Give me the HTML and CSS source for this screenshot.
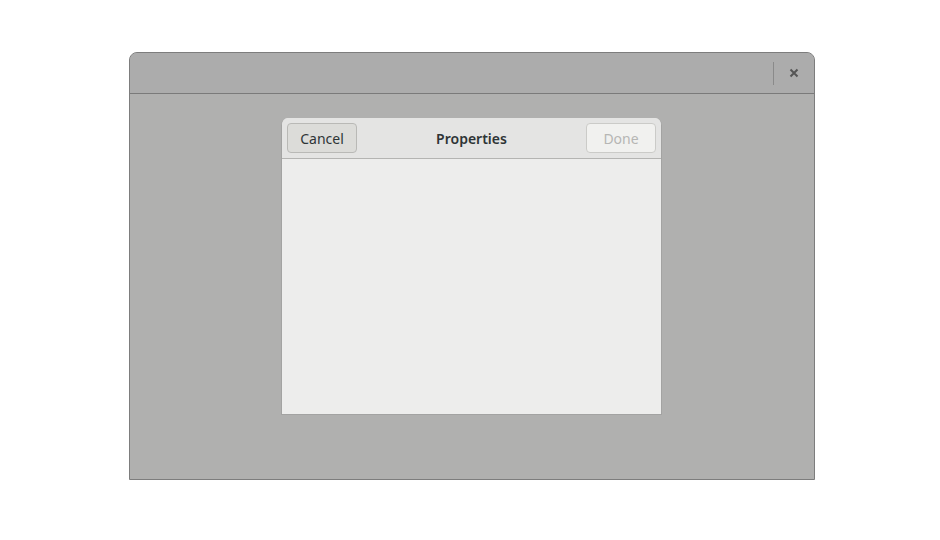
FILE: index.html
```html
<!DOCTYPE html>
<html>
<head>
<meta charset="utf-8">
<link rel="stylesheet" href="styles.css">
</head>
<body>
<div class="window">
  <div class="titlebar">
    <div class="sep"></div>
    <button class="close" aria-label="Close">
      <svg width="10" height="10" viewBox="0 0 10 10"><path d="M1.5 1.5 L8.5 8.5 M8.5 1.5 L1.5 8.5" stroke="#555" stroke-width="2" stroke-linecap="butt"/></svg>
    </button>
  </div>
  <div class="content">
    <div class="dialog">
      <div class="dheader">
        <button class="btn cancel">Cancel</button>
        <div class="dtitle">Properties</div>
        <button class="btn done">Done</button>
      </div>
      <div class="dbody"></div>
    </div>
  </div>
</div>
</body>
</html>
```
FILE: styles.css
```css
html, body { margin: 0; padding: 0; background: #ffffff; }
body { font-family: "Noto Sans", "DejaVu Sans", sans-serif; padding-top: 52px; padding-left: 129px; }
.window {
  width: 684px;
  height: 426px;
  border: 1px solid #7d7d7d;
  border-radius: 8px 8px 0 0;
  background: #b0b0af;
  display: flex;
  flex-direction: column;
  overflow: hidden;
}
.titlebar {
  height: 40px;
  background: #acacac;
  border-bottom: 1px solid #7a7a7a;
  display: flex;
  align-items: center;
  justify-content: flex-end;
  padding-right: 15px;
  flex: none;
}
.sep { width: 1px; height: 23px; background: #8a8a8a; margin-right: 15px; }
.close { border: 0; background: none; padding: 0; width: 10px; height: 10px; display: flex; }
.content { flex: 1; display: flex; justify-content: flex-start; padding-top: 24px; padding-left: 151px; }
.dialog {
  width: 379px;
  height: 296px;
  border: 1px solid #a3a3a2;
  border-top: 0;
  border-radius: 7px 7px 0 0;
  background: #ededec;
  display: flex;
  flex-direction: column;
  overflow: hidden;
}
.dheader {
  height: 40px;
  background: #e4e4e3;
  border-bottom: 1px solid #b4b4b2;
  display: flex;
  align-items: center;
  justify-content: space-between;
  padding: 0 5px 0 5px;
  flex: none;
}
.btn {
  width: 70px;
  height: 30px;
  border-radius: 4px;
  font-family: "Noto Sans", "DejaVu Sans", sans-serif;
  font-size: 14px;
  padding: 0;
  margin-top: 0;
}
.cancel { background: #dcdcd9; border: 1px solid #b9b9b6; color: #2e3436; }
.done { background: #f1f1ef; border: 1px solid #cbcbc8; color: #b6b6b4; }
.dtitle { font-weight: 600; font-size: 14px; color: #2e3436; }
.dbody { flex: 1; }
```
